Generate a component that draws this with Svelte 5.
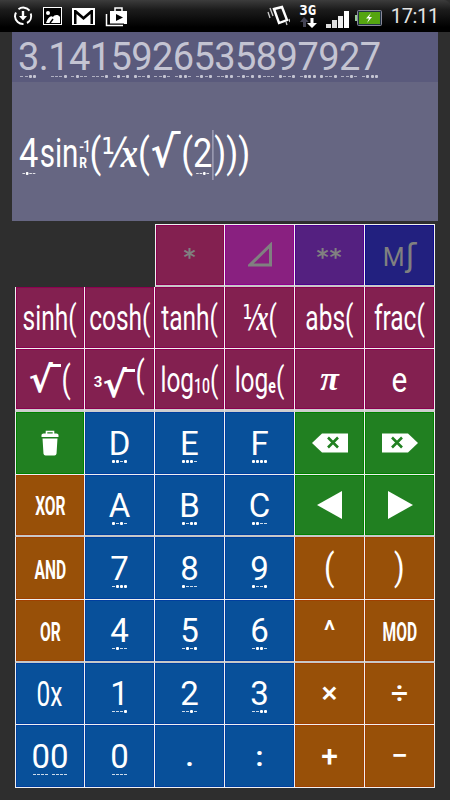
<script>
  const result = "3.1415926535897927";

  const rows = [
    [
      { empty: true }, { empty: true },
      { t: "*", c: "maroon dim star edge" },
      { icon: "triangle", c: "purple dim" },
      { t: "**", c: "violet dim star" },
      { t: "mf", c: "navy dim mf" },
    ],
    [
      { t: "sinh(", c: "maroon fn" }, { t: "cosh(", c: "maroon fn" }, { t: "tanh(", c: "maroon fn" },
      { t: "inv", c: "maroon fn" }, { t: "abs(", c: "maroon fn" }, { t: "frac(", c: "maroon fn" },
    ],
    [
      { t: "sqrt", c: "maroon rootkey" }, { t: "cbrt", c: "maroon rootkey" }, { t: "log10", c: "maroon fn" },
      { t: "loge", c: "maroon fn" }, { t: "π", c: "maroon pi" }, { t: "e", c: "maroon fn wide" },
    ],
    [
      { icon: "trash", c: "green" }, { hex: "D", c: "blue" }, { hex: "E", c: "blue" }, { hex: "F", c: "blue" },
      { icon: "delLeft", c: "green" }, { icon: "delRight", c: "green" },
    ],
    [
      { t: "XOR", c: "orange word" }, { hex: "A", c: "blue" }, { hex: "B", c: "blue" }, { hex: "C", c: "blue" },
      { icon: "left", c: "green" }, { icon: "right", c: "green" },
    ],
    [
      { t: "AND", c: "orange word" }, { hex: "7", c: "blue" }, { hex: "8", c: "blue" }, { hex: "9", c: "blue" },
      { t: "(", c: "orange paren" }, { t: ")", c: "orange paren" },
    ],
    [
      { t: "OR", c: "orange word" }, { hex: "4", c: "blue" }, { hex: "5", c: "blue" }, { hex: "6", c: "blue" },
      { t: "^", c: "orange caret" }, { t: "MOD", c: "orange word" },
    ],
    [
      { t: "0x", c: "blue fn" }, { hex: "1", c: "blue" }, { hex: "2", c: "blue" }, { hex: "3", c: "blue" },
      { t: "×", c: "orange op" }, { t: "÷", c: "orange op" },
    ],
    [
      { hex: "00", c: "blue" }, { hex: "0", c: "blue" }, { t: ".", c: "blue sep" }, { t: ":", c: "blue sep" },
      { t: "+", c: "orange op" }, { t: "−", c: "orange op" },
    ],
  ];

  // each hex digit carries its four bits underneath
  function bitsOf(ch) {
    return parseInt(ch, 16).toString(2).padStart(4, "0").split("");
  }
  const isHex = (ch) => /[0-9A-F]/.test(ch);
</script>

{#snippet hex(text)}
  {#each text.split("") as ch}
    <span class="ch">{ch}{#if isHex(ch)}<span class="bits">{#each bitsOf(ch) as b}<i class:on={b === "1"}></i>{/each}</span>{/if}</span>
  {/each}
{/snippet}

{#snippet radical(root)}
  <span class="radical">{#if root}<span class="root">3</span>{/if}<span class="sign">√</span><span class="bar"></span></span>
{/snippet}

{#snippet inverse()}
  <span class="one">⅟</span><span class="xvar">x</span>
{/snippet}

<div class="phone">
  <header class="status">
    <div class="left">
      <svg width="20" height="20" viewBox="0 0 20 20">
        <path d="M5.500 3.200A8 8 0 0 1 16.500 4.600M17.800 7.500A8 8 0 0 1 14 17M10.500 18A8 8 0 0 1 2 10.500 8 8 0 0 1 3 6.500" fill="none" stroke="#fff" stroke-width="2" />
        <path d="M8.800 5h2.400v5H14l-4 4.500L6 10h2.800z" fill="#fff" />
      </svg>
      <svg width="19" height="18" viewBox="0 0 19 18">
        <rect x=".5" y=".5" width="18" height="17" fill="#000" stroke="#fff" />
        <circle cx="5" cy="6" r="2" fill="#fff" />
        <path d="M3 16c2-6 5-8 7-6 1-2 5-3 7 0v6z" fill="#fff" />
        <path d="M7 16l3-4" stroke="#000" stroke-width="1.400" />
      </svg>
      <svg width="23" height="17" viewBox="0 0 23 17">
        <rect width="23" height="17" fill="#fff" />
        <path d="M2 2v14h2.500V6l7 6 7-6v10H21V2h-2l-7.500 6.500L4 2z" fill="#000" />
      </svg>
      <svg width="23" height="21" viewBox="0 0 23 21">
        <path d="M5 5h17v13H5z" fill="#fff" />
        <path d="M10 5V2h7v3" fill="none" stroke="#fff" stroke-width="1.500" />
        <path d="M11 8l7 3.500-7 3.500z" fill="#000" />
        <path d="M3 8.500v9.500h16" fill="none" stroke="#000" stroke-width="1" />
        <path d="M1.500 8v11.500H18" fill="none" stroke="#fff" stroke-width="1.500" />
      </svg>
    </div>
    <div class="right">
      <svg class="vib" width="23" height="23" viewBox="0 0 23 23">
        <path d="M7 4l8-2 5 13-8 3z" fill="none" stroke="#fff" stroke-width="2.400" />
        <path d="M3 3l3 8M1 7l2 6M19 17l1 3M22 14l1 3" stroke="#ccc" stroke-width="1.300" />
      </svg>
      <div class="net">
        <span class="g3">3G</span>
        <svg width="18" height="11" viewBox="0 0 18 11">
          <path d="M5 0l5 5H7v5H4V5H1z" fill="#445" />
          <path d="M11.500 1h3v5H18l-5 5-5-5h3.500z" fill="#fff" />
        </svg>
      </div>
      <svg class="sig" width="23" height="18" viewBox="0 0 23 18">
        <rect x="0" y="13" width="5" height="4" fill="#ddd" />
        <rect x="6" y="9" width="5" height="8" fill="#ddd" />
        <rect x="12" y="5" width="5" height="12" fill="#eee" />
        <rect x="18" y="0" width="5" height="17" fill="#fff" />
      </svg>
      <svg class="bat" width="27" height="16" viewBox="0 0 27 16">
        <rect x="0" y="5" width="3" height="6" fill="#9c9" />
        <rect x="2.500" y=".5" width="24" height="15" rx="1" fill="#234" stroke="#889" />
        <rect x="4" y="2" width="21" height="12" fill="#55a510" />
        <path d="M16 3l-5 5.500h3l-2 4.500 5-6h-3z" fill="#fff" />
      </svg>
      <span class="clock">17:11</span>
    </div>
  </header>

  <section class="display">
    <div class="result">{@render hex(result)}</div>
    <div class="expr">
      {@render hex("4")}<span class="sin">sin</span><span class="invmark"><span class="minus1">-1</span><span class="rad">R</span></span><span>(</span>{@render inverse()}<span>(</span>{@render radical(false)}<span>(</span>{@render hex("2")}<span class="cursor"></span><span>)))</span>
    </div>
  </section>

  <section class="keypad">
    {#each rows as row, r}
      {#each row as key, k}
        {#if key.empty}
          <div class="gap"></div>
        {:else}
          <button class="key {key.c}" class:first={k === 0} class:heavy={r === 0 || r === 4 || r === 6} class:split={r === 2}>
            {#if key.hex}
              <span class="digits">{@render hex(key.hex)}</span>
            {:else if key.icon === "triangle"}
              <svg width="24" height="25" viewBox="0 0 24 25"><path d="M22.500 3v20H2z" fill="none" stroke="#808080" stroke-width="3" /></svg>
            {:else if key.icon === "trash"}
              <svg width="18" height="26" viewBox="0 0 18 26">
                <path d="M5.500 4V1.500h7V4" fill="none" stroke="#fff" stroke-width="1.600" />
                <path d="M.5 5q0-1.500 2-1.500h13q2 0 2 1.500v2H.5z" fill="#fff" />
                <path d="M1.500 8.500h15l-1 15q-.2 2-2 2h-9q-1.800 0-2-2z" fill="#fff" />
              </svg>
            {:else if key.icon === "delLeft" || key.icon === "delRight"}
              <svg class:flip={key.icon === "delRight"} width="36" height="20" viewBox="0 0 36 20">
                <path d="M0 10L10 .5h26v19H10z" fill="#fff" />
                <path d="M16 4.500l10 10M26 4.500l-10 10" stroke="#218021" stroke-width="2.600" />
              </svg>
            {:else if key.icon === "left"}
              <svg width="26" height="28" viewBox="0 0 26 28"><path d="M25 0v28L0 14z" fill="#fff" /></svg>
            {:else if key.icon === "right"}
              <svg width="26" height="28" viewBox="0 0 26 28"><path d="M1 0v28l25-14z" fill="#fff" /></svg>
            {:else if key.t === "inv"}
              <span class="lbl">{@render inverse()}<span>(</span></span>
            {:else if key.t === "sqrt"}
              <span class="lbl">{@render radical(false)}<span class="thin">(</span></span>
            {:else if key.t === "cbrt"}
              <span class="lbl">{@render radical(true)}<span class="thin">(</span></span>
            {:else if key.t === "log10"}
              <span class="lbl">log<sub>10</sub>(</span>
            {:else if key.t === "loge"}
              <span class="lbl">log<sub class="bold">e</sub>(</span>
            {:else if key.t === "mf"}
              <span class="lbl"><span class="m">M</span><span class="f">ʃ</span></span>
            {:else}
              <span class="lbl">{key.t}</span>
            {/if}
          </button>
        {/if}
      {/each}
    {/each}
  </section>
</div>

<style>
  :global(body) {
    margin: 0;
    background: #2e2e2e;
  }

  .phone {
    width: 450px;
    height: 800px;
    background: #2e2e2e;
    overflow: hidden;
    font-family: Roboto, "Noto Sans", sans-serif;
    color: #fff;
  }

  .status {
    height: 32px;
    box-sizing: border-box;
    display: flex;
    justify-content: space-between;
    align-items: center;
    background: linear-gradient(#3c3c3c, #1c1c1c 30%, #000 85%);
    border-radius: 0 6px 0 0;
    padding: 0 11px 0 13px;
  }

  .left, .right {
    display: flex;
    align-items: center;
  }

  .left { gap: 10px; }

  .net {
    display: flex;
    flex-direction: column;
    align-items: center;
    margin: 0 9px 0 9px;
  }

  .g3 {
    font: bold 14px/13px "DejaVu Sans Mono", monospace;
  }

  .sig { margin-top: 7px; }
  .bat { margin: 4px 9px 0 6px; }

  .clock {
    font-size: 20px;
    color: #e4e4e4;
    letter-spacing: -.3px;
  }

  .display {
    margin: 0 12px;
    height: 189px;
    background: #666682;
    display: flex;
    flex-direction: column;
  }

  .result {
    height: 50px;
    box-sizing: border-box;
    background: #5a5a7c;
    padding: 5px 0 0 6px;
    font-size: 38px;
    line-height: 40px;
    color: #c4c4d2;
    white-space: nowrap;
    letter-spacing: -.6px;
  }

  .result .bits { margin-top: -2px; }
  .result .bits i { margin: 0 .7px; }

  .expr {
    display: flex;
    align-items: baseline;
    padding: 48px 0 0 7px;
    font-size: 40px;
    line-height: 44px;
    white-space: nowrap;
    transform: scaleX(.86);
    transform-origin: 7px 0;
  }

  .expr .bits { margin-top: -4px; }

  .expr .sign {
    font-size: 43px;
    line-height: 44px;
  }

  .expr .bar {
    width: 9px;
    margin: 1px 0 0 -3px;
  }

  .sin {
    display: inline-block;
    transform: scaleX(.86);
    transform-origin: left;
    margin: 0 -7px 0 2px;
  }

  .ch {
    display: inline-flex;
    flex-direction: column;
    align-items: center;
  }

  .bits {
    display: flex;
    align-items: center;
    height: 3px;
    margin-top: -1px;
  }

  .bits i {
    display: block;
    width: 3px;
    height: 1px;
    margin: 0 .5px;
    background: currentColor;
    opacity: .8;
  }

  .bits i.on {
    height: 3px;
    border-radius: 1px;
    opacity: 1;
  }

  .invmark {
    display: inline-flex;
    flex-direction: column;
    align-self: center;
    width: 12px;
    line-height: 1;
  }

  .minus1 {
    font-size: 16px;
    font-weight: 500;
    letter-spacing: -1px;
    margin-top: -2px;
  }

  .rad {
    font: bold 14px/12px Roboto, sans-serif;
    margin-top: 2px;
  }

  .cursor {
    align-self: center;
    width: 1px;
    height: 50px;
    margin-right: 1px;
    background: #c8c8dc;
  }

  .keypad {
    display: grid;
    grid-template-columns: repeat(6, 70px);
    grid-template-rows: repeat(9, 62.67px);
    margin: 3px 0 0 15px;
    width: 421px;
  }

  .key {
    all: unset;
    box-sizing: border-box;
    display: flex;
    align-items: center;
    justify-content: center;
    border-right: 1px solid #f0f0f0;
    border-bottom: 1px solid #f0f0f0;
    overflow: hidden;
  }

  .key.first, .key.edge { border-left: 1px solid #f0f0f0; }
  .key.heavy { border-bottom: 2px solid #c8c8c8; }
  .key.split { border-bottom: 3px solid #cfcfcf; }

  .maroon { background: #832050; box-shadow: inset 0 0 0 1px #8c0050; }
  .purple { background: #892080; box-shadow: inset 0 0 0 1px #900090; }
  .violet { background: #542080; box-shadow: inset 0 0 0 1px #500090; }
  .navy { background: #22207f; box-shadow: inset 0 0 0 1px #0f0a90; }
  .blue { background: #08509a; box-shadow: inset 0 0 0 1px #003f9f; }
  .green { background: #218021; box-shadow: inset 0 0 0 1px #008000; }
  .orange { background: #985008; box-shadow: inset 0 0 0 1px #a04000; }

  .dim {
    border-top: 1px solid #f0f0f0;
    color: #808080;
  }

  .star .lbl {
    font: bold 23px/1 "DejaVu Sans", sans-serif;
    letter-spacing: 1px;
    margin-top: 6px;
  }

  .mf .lbl {
    display: flex;
    align-items: baseline;
    gap: 1px;
    font-size: 30px;
  }

  .mf .m { font-size: 25px; }

  .mf .f {
    font-family: "DejaVu Sans", sans-serif;
    font-size: 32px;
  }

  .digits {
    font-size: 33px;
    line-height: 33px;
    margin-top: 4px;
    display: flex;
  }

  .digits .bits { margin-top: 0; }

  .fn .lbl {
    display: flex;
    align-items: baseline;
    font-size: 35px;
    line-height: 38px;
    margin-top: 3px;
    transform: scaleX(.7);
    white-space: nowrap;
  }

  .fn.wide .lbl { transform: scaleX(.85); }

  .fn sub {
    font-size: 20px;
    line-height: 0;
    font-weight: 500;
    position: relative;
    top: 1px;
  }

  .fn sub.bold { font-weight: 700; }

  .paren .lbl {
    font-size: 36px;
    line-height: 38px;
    transform: scaleX(.85);
  }

  .rootkey .lbl {
    display: flex;
    align-items: baseline;
    font-size: 32px;
    line-height: 36px;
    white-space: nowrap;
    margin-top: 2px;
  }

  .thin {
    display: inline-block;
    font-size: 36px;
    margin-left: -2px;
    transform: scaleX(.75);
  }

  .word .lbl {
    font-size: 26px;
    font-weight: 700;
    transform: scaleX(.6);
    white-space: nowrap;
    margin-top: 3px;
  }

  .pi .lbl {
    font: italic bold 34px/1 "Liberation Serif", serif;
  }

  .caret .lbl {
    font-size: 27px;
    font-weight: 500;
    margin-top: 2px;
  }

  .op .lbl {
    font-size: 30px;
    font-weight: 500;
    line-height: 36px;
  }

  .sep .lbl {
    font: bold 28px/1 Roboto, sans-serif;
    margin-top: 2px;
  }

  .flip { transform: scaleX(-1); }

  .one {
    font-family: "DejaVu Sans", sans-serif;
  }

  .xvar {
    font-family: "Liberation Serif", serif;
    font-style: italic;
    font-weight: bold;
  }

  .radical {
    display: inline-flex;
    align-items: flex-start;
    margin: 0 1px;
  }

  .sign {
    font-family: "DejaVu Sans", sans-serif;
    font-weight: bold;
    font-size: 36px;
    line-height: 36px;
  }

  .bar {
    width: 11px;
    height: 3px;
    margin: 2px 0 0 -3px;
    background: #fff;
  }

  .root {
    width: 9px;
    margin: 8px 0 0 0;
    font-size: 15px;
    font-weight: 700;
    line-height: 14px;
  }
</style>
